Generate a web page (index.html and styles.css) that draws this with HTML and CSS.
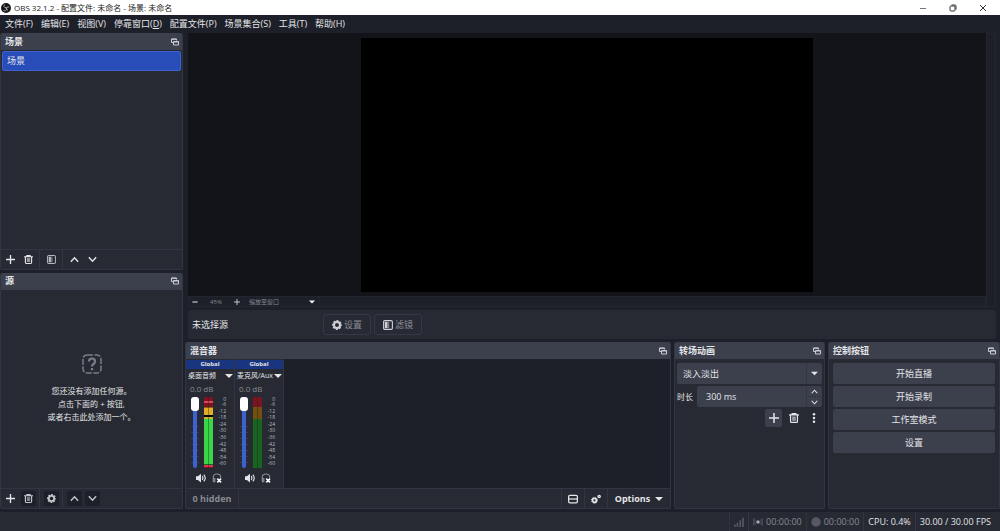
FILE: index.html
```html
<!DOCTYPE html>
<html lang="zh-CN">
<head>
  <meta charset="UTF-8" />
  <meta name="viewport" content="width=device-width, initial-scale=1" />
  <title>OBS 32.1.2</title>
  <link rel="stylesheet" href="styles.css">
</head>
<body>

  <svg class="sprite" aria-hidden="true">
    <symbol id="plus" viewBox="0 0 16 16"><path d="M8 0v16M0 8h16" fill="none" stroke="currentColor" stroke-width="2.400"/></symbol>
    <symbol id="minus" viewBox="0 0 16 16"><path d="M1 8h14" stroke="currentColor" stroke-width="3"/></symbol>
    <symbol id="trash" viewBox="0 0 16 16">
      <path d="M5 2V1h6v1M0 3h16M2.500 4v9.500q0 1.500 1.500 1.500h8q1.500 0 1.500-1.500V4" fill="none" stroke="currentColor" stroke-width="2"/>
      <path d="M5 5.500h6v7H5z" fill="currentColor" opacity=".6"/>
    </symbol>
    <symbol id="filter" viewBox="0 0 16 16">
      <rect x="1" y="1" width="14" height="14" rx="2" fill="none" stroke="currentColor" stroke-width="1.800"/>
      <path d="M3 3h4v10H3z" fill="currentColor"/>
      <path d="M7 3h3v10H7z" fill="currentColor" opacity=".5"/>
    </symbol>
    <symbol id="up" viewBox="0 0 16 16"><path d="M1.500 12L8 5l6.500 7" fill="none" stroke="currentColor" stroke-width="2.500"/></symbol>
    <symbol id="down" viewBox="0 0 16 16"><path d="M1.500 4L8 11l6.500-7" fill="none" stroke="currentColor" stroke-width="2.500"/></symbol>
    <symbol id="caret" viewBox="0 0 16 16"><path d="M0 4h16l-8 8z" fill="currentColor"/></symbol>
    <symbol id="gear" viewBox="0 0 16 16">
      <circle cx="8" cy="8" r="4.800" fill="none" stroke="currentColor" stroke-width="3.200"/>
      <circle cx="8" cy="8" r="6.800" fill="none" stroke="currentColor" stroke-width="2.200" stroke-dasharray="3.340 2" stroke-dashoffset="1.670"/>
    </symbol>
    <symbol id="gears" viewBox="0 0 16 16">
      <circle cx="5.500" cy="10" r="3.200" fill="none" stroke="currentColor" stroke-width="2.800"/>
      <circle cx="5.500" cy="10" r="4.800" fill="none" stroke="currentColor" stroke-width="1.400" stroke-dasharray="1.890 1.890"/>
      <circle cx="13" cy="4" r="1.800" fill="none" stroke="currentColor" stroke-width="2.200"/>
    </symbol>
    <symbol id="float" viewBox="0 0 16 16">
      <path d="M4 9H1V2h10v3M1 2.500h10" fill="none" stroke="currentColor" stroke-width="2"/>
      <path d="M5 7h10v7H5zM5 8h10" fill="none" stroke="currentColor" stroke-width="2"/>
    </symbol>
    <symbol id="speaker" viewBox="0 0 16 16">
      <path d="M0 5h3l5-4v14l-5-4H0z" fill="currentColor"/>
      <path d="M10 5q2 3 0 6M12.500 2.500q4.500 5.500 0 11" fill="none" stroke="currentColor" stroke-width="1.800"/>
    </symbol>
    <symbol id="phones" viewBox="0 0 16 16">
      <path d="M2 13V7q0-5.500 6-5.500T14 7v1M2 9h2.500v5H2.500z" fill="none" stroke="currentColor" stroke-width="1.800"/>
      <path d="M8.500 9l6 6M14.500 9l-6 6" stroke="#fefefe" stroke-width="2.400"/>
    </symbol>
    <symbol id="rows" viewBox="0 0 16 16">
      <rect x="1" y="2" width="14" height="12" rx="2" fill="none" stroke="currentColor" stroke-width="2"/>
      <path d="M1 8h14" stroke="currentColor" stroke-width="2"/>
    </symbol>
    <symbol id="dots" viewBox="0 0 16 16">
      <circle cx="8" cy="2" r="2" fill="currentColor"/><circle cx="8" cy="8" r="2" fill="currentColor"/><circle cx="8" cy="14" r="2" fill="currentColor"/>
    </symbol>
  </svg>

  <header class="titlebar">
    <svg class="logo" viewBox="0 0 20 20" aria-hidden="true">
      <circle cx="10" cy="10" r="10" fill="#16161a"/>
      <path d="M7 3q-3 4 1 6.500 3 1 4.500-1.500M16.500 8q-4.500-1.500-5.500 2.500 0 3.500 3 4M5 15q4 2 6-1.500 1-3-2-4.500" fill="none" stroke="#c8c8cc" stroke-width="1.500"/>
    </svg>
    <h1>OBS 32.1.2 - 配置文件: 未命名 - 场景: 未命名</h1>
    <div class="window-buttons">
      <button aria-label="最小化"><svg viewBox="0 0 8 8"><path d="M1 4.500h6" stroke="#777"/></svg></button>
      <button aria-label="还原"><svg viewBox="0 0 8 8"><rect x="1" y="2" width="5" height="5" rx="1" fill="none" stroke="#333"/><path d="M2.500 1H6q1 0 1 1v3.500" fill="none" stroke="#333"/></svg></button>
      <button aria-label="关闭"><svg viewBox="0 0 8 8"><path d="M1 1l6 6M7 1L1 7" stroke="#333"/></svg></button>
    </div>
  </header>

  <nav class="menubar">
    <button>文件(F)</button>
    <button>编辑(E)</button>
    <button>视图(V)</button>
    <button>停靠窗口(<u>D</u>)</button>
    <button>配置文件(P)</button>
    <button>场景集合(S)</button>
    <button>工具(T)</button>
    <button>帮助(H)</button>
  </nav>

  <main>
    <div class="side">
      <section class="dock">
        <div class="dock-title"><h2>场景</h2><svg class="icon"><use href="#float"/></svg></div>
        <ul class="scene-list">
          <li class="selected">场景</li>
        </ul>
        <div class="toolbar">
          <button aria-label="添加场景"><svg class="icon"><use href="#plus"/></svg></button>
          <button aria-label="移除场景"><svg class="icon"><use href="#trash"/></svg></button>
          <span class="sep"></span>
          <button class="dim" aria-label="场景滤镜"><svg class="icon"><use href="#filter"/></svg></button>
          <span class="sep"></span>
          <button aria-label="上移"><svg class="icon"><use href="#up"/></svg></button>
          <button aria-label="下移"><svg class="icon"><use href="#down"/></svg></button>
        </div>
      </section>

      <section class="dock">
        <div class="dock-title"><h2>源</h2><svg class="icon"><use href="#float"/></svg></div>
        <div class="empty">
          <svg viewBox="0 0 20 20" aria-hidden="true">
            <rect x="1" y="1" width="18" height="18" rx="4" fill="none" stroke="currentColor" stroke-width="1.500" stroke-dasharray="6 1.500"/>
            <path d="M7 7.500Q7 4.500 10 4.500T13 7.500Q13 9 11.500 10T10 12.500M10 14v2.200" fill="none" stroke="currentColor" stroke-width="2.200"/>
          </svg>
          <p>您还没有添加任何源。<br>点击下面的 + 按钮,<br>或者右击此处添加一个。</p>
        </div>
        <div class="toolbar">
          <button aria-label="添加源"><svg class="icon"><use href="#plus"/></svg></button>
          <button class="off" aria-label="移除源"><svg class="icon"><use href="#trash"/></svg></button>
          <span class="sep"></span>
          <button class="off" aria-label="源属性"><svg class="icon"><use href="#gear"/></svg></button>
          <span class="sep"></span>
          <button class="off" aria-label="上移"><svg class="icon"><use href="#up"/></svg></button>
          <button class="off" aria-label="下移"><svg class="icon"><use href="#down"/></svg></button>
        </div>
      </section>
    </div>

    <div class="center">
      <div class="preview">
        <div class="stage"><div class="canvas"></div></div>
        <div class="scroll"></div>
        <div class="zoombar">
          <button aria-label="缩小"><svg class="icon"><use href="#minus"/></svg></button>
          <span class="percent">45%</span>
          <button aria-label="放大"><svg class="icon"><use href="#plus"/></svg></button>
          <span class="pick">
            <select aria-label="缩放模式"><option>缩放至窗口</option></select>
            <svg class="icon"><use href="#caret"/></svg>
          </span>
        </div>
      </div>

      <div class="context">
        <span class="context-label">未选择源</span>
        <button><svg class="icon"><use href="#gear"/></svg>设置</button>
        <button><svg class="icon"><use href="#filter"/></svg>滤镜</button>
      </div>

      <div class="docks">
        <section class="dock mixer">
          <div class="dock-title"><h2>混音器</h2><svg class="icon"><use href="#float"/></svg></div>
          <div class="channels">
            <div class="channel">
              <div class="scope">Global</div>
              <button class="name"><span>桌面音频</span><svg class="icon"><use href="#caret"/></svg></button>
              <div class="db">0.0 dB</div>
              <div class="levels">
                <input type="range" min="0" max="100" value="100" aria-label="桌面音频音量">
                <div class="meter live"></div>
                <ol class="scale"><li>0</li><li>-6</li><li>-12</li><li>-18</li><li>-24</li><li>-30</li><li>-36</li><li>-42</li><li>-48</li><li>-54</li><li>-60</li></ol>
              </div>
              <div class="channel-buttons">
                <button aria-label="静音"><svg class="icon"><use href="#speaker"/></svg></button>
                <button class="monitor" aria-label="监听"><svg class="icon"><use href="#phones"/></svg></button>
              </div>
            </div>
            <div class="channel">
              <div class="scope">Global</div>
              <button class="name"><span>麦克风/Aux</span><svg class="icon"><use href="#caret"/></svg></button>
              <div class="db">0.0 dB</div>
              <div class="levels">
                <input type="range" min="0" max="100" value="100" aria-label="麦克风音量">
                <div class="meter"></div>
                <ol class="scale"><li>0</li><li>-6</li><li>-12</li><li>-18</li><li>-24</li><li>-30</li><li>-36</li><li>-42</li><li>-48</li><li>-54</li><li>-60</li></ol>
              </div>
              <div class="channel-buttons">
                <button aria-label="静音"><svg class="icon"><use href="#speaker"/></svg></button>
                <button class="monitor" aria-label="监听"><svg class="icon"><use href="#phones"/></svg></button>
              </div>
            </div>
          </div>
          <div class="mixer-bar">
            <button class="hidden-count">0 hidden</button>
            <button class="tool" aria-label="布局"><svg class="icon"><use href="#rows"/></svg></button>
            <button class="tool" aria-label="高级音频属性"><svg class="icon"><use href="#gears"/></svg></button>
            <button class="options">Options<svg class="icon"><use href="#caret"/></svg></button>
          </div>
        </section>

        <section class="dock transitions">
          <div class="dock-title"><h2>转场动画</h2><svg class="icon"><use href="#float"/></svg></div>
          <div class="dock-body">
            <div class="field">
              <select aria-label="转场"><option>淡入淡出</option></select>
              <span class="field-end"><svg class="icon"><use href="#caret"/></svg></span>
            </div>
            <div class="duration">
              <label for="duration">时长</label>
              <div class="field">
                <input id="duration" type="text" value="300 ms">
                <span class="field-end spin">
                  <button aria-label="增加"><svg class="icon"><use href="#up"/></svg></button>
                  <button aria-label="减少"><svg class="icon"><use href="#down"/></svg></button>
                </span>
              </div>
            </div>
            <div class="transition-buttons">
              <button class="filled" aria-label="添加转场"><svg class="icon"><use href="#plus"/></svg></button>
              <button aria-label="移除转场"><svg class="icon"><use href="#trash"/></svg></button>
              <button aria-label="更多"><svg class="icon"><use href="#dots"/></svg></button>
            </div>
          </div>
        </section>

        <section class="dock controls">
          <div class="dock-title"><h2>控制按钮</h2><svg class="icon"><use href="#float"/></svg></div>
          <div class="dock-body">
            <button>开始直播</button>
            <button>开始录制</button>
            <button>工作室模式</button>
            <button>设置</button>
          </div>
        </section>
      </div>
    </div>
  </main>

  <footer class="status">
    <div class="cell">
      <svg class="icon" viewBox="0 0 16 16"><path d="M1.500 16v-4M5.500 16V9M10 16V5M14.500 16V1" stroke="currentColor" stroke-width="2.600"/></svg>
    </div>
    <div class="cell">
      <svg class="icon" viewBox="0 0 16 16"><circle cx="8" cy="8" r="2.800" fill="#a4a7b0"/><path d="M4 4q-3 4 0 8M12 4q3 4 0 8M1.500 2q-3 6 0 12M14.500 2q3 6 0 12" fill="none" stroke="currentColor" stroke-width="1.500"/></svg>
      <span>00:00:00</span>
    </div>
    <div class="cell">
      <svg class="icon" viewBox="0 0 16 16"><circle cx="8" cy="8" r="7.500" fill="currentColor"/></svg>
      <span>00:00:00</span>
    </div>
    <div class="cell on">CPU: 0.4%</div>
    <div class="cell on">30.00 / 30.00 FPS</div>
  </footer>

</body>
</html>
```
FILE: styles.css
```css
:root {
  --window: #1d2028;
  --panel: #272a33;
  --title: #3c404d;
  --line: #323643;
  --text: #e4e5e8;
  --muted: #878a92;
  --blue: #284cb8;
  --blue-light: #3d62cf;
}

* {
  box-sizing: border-box;
  margin: 0;
  padding: 0;
}

body {
  font: 9px/12px "Open Sans", "Noto Sans CJK SC", sans-serif;
  background: var(--window);
  color: var(--text);
  display: flex;
  flex-direction: column;
  height: 100vh;
  min-width: 800px;
  overflow: hidden;
}

button, input, select {
  font: inherit;
  color: inherit;
  background: none;
  border: none;
  outline: none;
  appearance: none;
}

button {
  display: flex;
  align-items: center;
  justify-content: center;
  white-space: nowrap;
}

h1, h2 {
  font-size: 9px;
}

ul, ol {
  list-style: none;
}

.sprite {
  display: none;
}

.icon {
  width: 9px;
  height: 9px;
  flex: none;
}

/* title bar and menu */
.titlebar {
  display: flex;
  align-items: center;
  gap: 3px;
  height: 15px;
  padding: 0 2px 0 1px;
  background: #fff;
  color: #222;
}

.titlebar h1 {
  flex: 1;
  font-size: 8px;
  font-weight: 400;
}

.logo {
  width: 10px;
  height: 10px;
}

.window-buttons {
  display: flex;
}

.window-buttons button {
  width: 30px;
  height: 15px;
}

.window-buttons svg {
  width: 8px;
  height: 8px;
}

.menubar {
  display: flex;
  gap: 8px;
  height: 18px;
  padding: 0 5px;
}

/* layout */
main {
  flex: 1;
  min-height: 0;
  display: flex;
  gap: 2px;
}

.side {
  width: 183px;
  display: flex;
  flex-direction: column;
  gap: 3px;
}

.side .dock {
  flex: 1;
}

.center {
  flex: 1;
  min-width: 0;
  display: flex;
  flex-direction: column;
  gap: 3px;
}

.dock {
  display: flex;
  flex-direction: column;
  min-width: 0;
  min-height: 0;
  background: var(--panel);
  border: 1px solid var(--line);
  border-top: none;
  border-radius: 2px;
}

.dock-title {
  display: flex;
  align-items: center;
  justify-content: space-between;
  height: 17px;
  flex: none;
  padding: 0 3px 0 4px;
  background: var(--title);
  border-radius: 2px 2px 0 0;
}

.dock-title .icon {
  width: 8px;
  height: 8px;
  color: #c9cbd1;
}

/* scenes and sources */
.scene-list {
  flex: 1;
  padding: 1px;
}

.scene-list .selected {
  height: 20px;
  padding: 3px 4px;
  background: var(--blue);
  border: 1px solid var(--blue-light);
  border-radius: 2px;
}

.toolbar {
  display: flex;
  align-items: center;
  gap: 3px;
  height: 20px;
  padding: 0 2px;
  border-top: 1px solid var(--line);
}

.toolbar button {
  width: 15px;
  height: 15px;
  border-radius: 2px;
}

.toolbar .dim {
  color: #b5b7be;
}

.toolbar .off {
  background: var(--window);
  color: #c4c6cc;
}

.sep {
  width: 2px;
  height: 100%;
  background: linear-gradient(90deg, var(--line) 1px, transparent 1px);
}

.empty {
  flex: 1;
  display: flex;
  flex-direction: column;
  align-items: center;
  justify-content: center;
  gap: 10px;
  font-size: 8px;
  line-height: 13px;
  text-align: center;
}

.empty svg {
  width: 20px;
  height: 20px;
  color: #7b7e87;
}

/* preview */
.preview {
  flex: 1;
  min-height: 0;
  display: grid;
  grid-template-columns: 1fr 10px;
  grid-template-rows: 1fr 11px;
  margin: 0 4px 0 3px;
}

.stage {
  display: flex;
  align-items: center;
  justify-content: center;
  min-height: 0;
  background: #131419;
}

.canvas {
  height: calc(100% - 9px);
  aspect-ratio: 16 / 9;
  background: #000;
}

.scroll {
  grid-row: 1 / 3;
  grid-column: 2;
  border: 1px solid #23262f;
}

.zoombar {
  grid-row: 2;
  display: flex;
  align-items: center;
  border: 1px solid #23262f;
  font-size: 6px;
  color: var(--muted);
}

.zoombar button {
  width: 12px;
}

.zoombar button .icon {
  width: 6px;
  height: 6px;
  color: #d0d2d6;
}

.percent {
  width: 30px;
  text-align: center;
}

.pick {
  display: flex;
  align-items: center;
  width: 76px;
  height: 100%;
  margin-left: 1px;
  border: solid #23262f;
  border-width: 0 1px;
}

.pick select {
  flex: 1;
  padding-left: 4px;
}

.pick .icon {
  width: 6px;
  height: 6px;
  margin-right: 4px;
  color: #fff;
}

.context {
  display: flex;
  align-items: center;
  gap: 3px;
  height: 29px;
  margin: 0 4px 0 3px;
  padding-left: 4px;
  background: var(--panel);
  border-radius: 2px;
}

.context-label {
  width: 128px;
}

.context button {
  gap: 2px;
  width: 48px;
  height: 21px;
  border: 1px solid #353946;
  border-radius: 3px;
  color: #8a8d95;
}

.context .icon {
  width: 10px;
  height: 10px;
  color: #cfd1d6;
}

/* bottom docks */
.docks {
  display: flex;
  gap: 3px;
  height: 167px;
}

.mixer {
  flex: 1;
}

.transitions {
  width: 151px;
}

.controls {
  width: 172px;
}

.channels {
  flex: 1;
  display: flex;
  background: var(--window);
}

.channel {
  width: 49px;
  padding-top: 1px;
  background: var(--panel);
  border-right: 1px solid var(--line);
}

.scope {
  height: 9px;
  background: #1a3580;
  font-size: 6px;
  line-height: 9px;
  font-weight: 700;
  text-align: center;
}

.name {
  justify-content: space-between;
  width: 100%;
  height: 14px;
  padding: 0 1px 0 2px;
  font-size: 7px;
}

.name .icon {
  width: 8px;
  height: 8px;
}

.db {
  height: 14px;
  padding-left: 4px;
  font-size: 8px;
  color: var(--muted);
}

/* fader, meter and scale; the ticks sit behind the fader */
.levels {
  display: flex;
  height: 71px;
  padding-left: 5px;
}

.levels input {
  writing-mode: vertical-lr;
  direction: rtl;
  width: 8px;
  height: 71px;
  background: repeating-linear-gradient(transparent 0 5px, #3a3e4a 5px 6px) 0 24px / 100% 100% no-repeat;
}

.levels input::-webkit-slider-runnable-track {
  width: 4px;
  background: #3b62cf;
  border-radius: 2px;
}

.levels input::-webkit-slider-thumb {
  appearance: none;
  width: 8px;
  height: 14px;
  margin-left: -2px;
  background: #fff;
  border-radius: 3px;
}

.meter {
  width: 9px;
  margin: 0 3px 0 5px;
  background:
    linear-gradient(90deg, transparent 4px, rgba(20, 30, 30, 0.4) 4px 5px, transparent 5px),
    linear-gradient(#7d1320 10px, #745010 10px 22px, #19641f 22px);
}

.meter.live {
  background:
    linear-gradient(90deg, transparent 4px, rgba(20, 40, 20, 0.4) 4px 5px, transparent 5px),
    linear-gradient(#7d1320 4px, #e5405c 4px 6px, #7d1320 6px 10px, #8a6114 10px 11px, #e3ac28 11px 18px, #000 18px 20px, #c9b52c 20px 22px, #3bd548 22px 67px, #19641f 67px 68px, #dc3550 68px 70px, #7d1320 70px);
}

.scale {
  display: flex;
  flex-direction: column;
  width: 10px;
  font-size: 5px;
  line-height: 5px;
  text-align: right;
  color: #b8bac0;
}

.scale li {
  flex: 1;
}

.scale li:first-child {
  flex: none;
  height: 5px;
}

.channel-buttons {
  display: flex;
  gap: 6px;
  padding: 5px 10px;
}

.channel-buttons .icon {
  width: 10px;
  height: 10px;
}

.monitor {
  color: #8a8d95;
}

.mixer-bar {
  display: flex;
  height: 20px;
  border-top: 1px solid var(--line);
  font-weight: 700;
}

.hidden-count {
  width: 53px;
  margin-right: auto;
  border-right: 1px solid var(--line);
  color: var(--muted);
}

.mixer-bar .tool {
  width: 23px;
  border-left: 1px solid var(--line);
}

.mixer-bar .tool .icon {
  width: 10px;
  height: 10px;
}

.options {
  gap: 5px;
  width: 63px;
  border-left: 1px solid var(--line);
}

.options .icon {
  width: 8px;
  height: 8px;
}

.dock-body {
  display: flex;
  flex-direction: column;
  gap: 2px;
  padding: 4px 2px;
}

.field {
  flex: 1 1 21px;
  min-width: 0;
  display: flex;
  height: 21px;
  background: var(--title);
  border-radius: 2px;
}

.field select,
.field input {
  flex: 1;
  min-width: 0;
  padding-left: 6px;
}

.field input {
  padding-left: 9px;
}

.field-end {
  display: flex;
  align-items: center;
  justify-content: center;
  width: 16px;
  border-left: 1px solid #333743;
}

.field-end .icon {
  width: 7px;
  height: 7px;
}

.spin {
  flex-direction: column;
}

.spin button {
  flex: 1;
  width: 100%;
}

.spin button + button {
  border-top: 1px solid #333743;
}

.duration {
  display: flex;
  align-items: center;
  gap: 2px;
}

.duration label {
  width: 18px;
  font-size: 8px;
}

.transition-buttons {
  display: flex;
  justify-content: flex-end;
  gap: 3px;
}

.transition-buttons button {
  width: 17px;
  height: 18px;
  border-radius: 2px;
}

.transition-buttons .icon {
  width: 10px;
  height: 10px;
}

.filled {
  background: var(--title);
}

.controls .dock-body {
  padding: 4px;
}

.controls button {
  height: 21px;
  background: var(--title);
  border-radius: 2px;
}

/* status bar */
.status {
  display: flex;
  justify-content: flex-end;
  height: 19px;
  margin-top: 3px;
  padding-right: 5px;
  background: var(--panel);
}

.cell {
  display: flex;
  align-items: center;
  gap: 3px;
  padding: 0 4px;
  border-left: 1px solid var(--line);
  color: var(--muted);
  white-space: nowrap;
}

.cell .icon {
  width: 10px;
  height: 10px;
  color: #565963;
}

.cell.on {
  color: var(--text);
}
```
